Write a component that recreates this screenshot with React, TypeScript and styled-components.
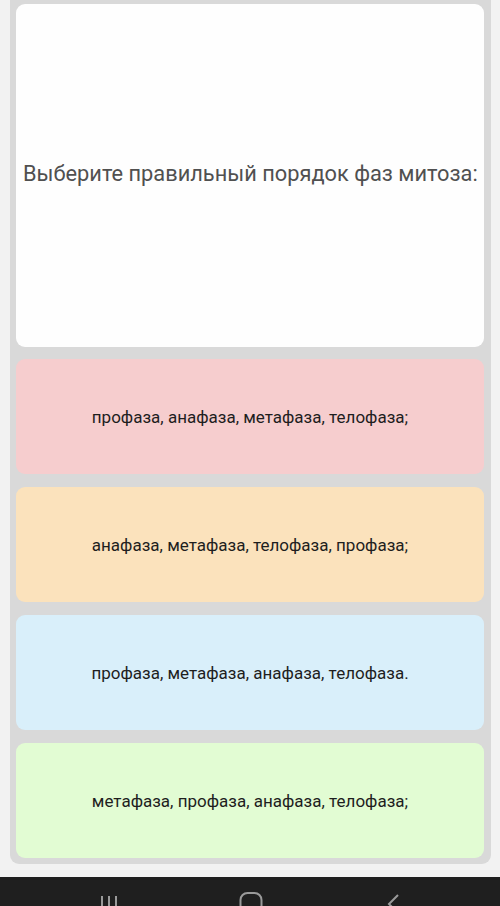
import React from 'react';
import styled, { createGlobalStyle } from 'styled-components';

const GlobalStyle = createGlobalStyle`
  html, body {
    margin: 0;
    padding: 0;
    background: #f2f2f2;
    font-family: Roboto, "Noto Sans", Arial, sans-serif;
  }
`;

const Screen = styled.div`
  width: 500px;
  height: 906px;
  display: flex;
  flex-direction: column;
  background: #f2f2f2;
  overflow: hidden;
`;

const Panel = styled.div`
  margin: 0 9px 0 10px;
  padding: 4px 7px 6px 6px;
  background: #d9d9d9;
  border-radius: 0 0 9px 9px;
  display: flex;
  flex-direction: column;
  gap: 13px;
`;

const QuestionCard = styled.div`
  height: 343px;
  background: #fefefe;
  border-radius: 9px;
  display: flex;
  align-items: center;
  padding: 0 7px;
  margin-bottom: -1px;
`;

const QuestionText = styled.p`
  margin: -4px 0 0;
  font-size: 21.8px;
  color: #505050;
  white-space: nowrap;
`;

const Answer = styled.div<{ $bg: string }>`
  height: 115px;
  background: ${(p) => p.$bg};
  border-radius: 9px;
  display: flex;
  align-items: center;
  justify-content: center;
  font-size: 17px;
  color: #1e1e1e;
`;

const NavBar = styled.div`
  margin-top: auto;
  height: 29px;
  background: #1f1f1f;
  display: flex;
  justify-content: space-between;
  align-items: flex-start;
  padding: 0 95px 0 97px;
`;

const NavIcon = styled.svg`
  margin-top: 15px;
  width: 24px;
  height: 24px;
`;

const answers = [
  { text: 'профаза, анафаза, метафаза, телофаза;', bg: '#f6cdce' },
  { text: 'анафаза, метафаза, телофаза, профаза;', bg: '#fbe2bc' },
  { text: 'профаза, метафаза, анафаза, телофаза.', bg: '#d9effa' },
  { text: 'метафаза, профаза, анафаза, телофаза;', bg: '#e2fcd3' },
];

const App: React.FC = () => {
  return (
    <Screen>
      <GlobalStyle />
      <Panel>
        <QuestionCard>
          <QuestionText>Выберите правильный порядок фаз митоза:</QuestionText>
        </QuestionCard>
        {answers.map((a, i) => (
          <Answer key={i} $bg={a.bg}>
            {a.text}
          </Answer>
        ))}
      </Panel>
      <NavBar>
        <NavIcon viewBox="0 0 24 24" fill="none" stroke="#9a9a9a" strokeWidth="2">
          <path d="M5 4v16M12 4v16M19 4v16" />
        </NavIcon>
        <NavIcon viewBox="0 0 24 24" fill="none" stroke="#9a9a9a" strokeWidth="2">
          <rect x="1.5" y="1" width="21" height="21" rx="7" />
        </NavIcon>
        <NavIcon viewBox="0 0 24 24" fill="none" stroke="#9a9a9a" strokeWidth="2">
          <path d="M17 3l-9 9 9 9" />
        </NavIcon>
      </NavBar>
    </Screen>
  );
};

export default App;
